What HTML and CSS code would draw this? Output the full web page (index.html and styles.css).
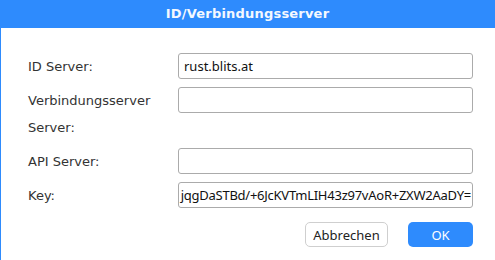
FILE: index.html
```html
<!DOCTYPE html>
<html lang="de">
<head>
    <meta charset="UTF-8">
    <title>ID/Verbindungsserver</title>
    <link rel="stylesheet" href="styles.css">
</head>
<body>
    <div class="dialog">
        <div class="title-bar">ID/Verbindungsserver</div>

        <form class="server-form">
            <label class="field-label" for="id-server">ID Server:</label>
            <input class="field-input" type="text" id="id-server" value="rust.blits.at">

            <label class="field-label" for="relay-server">Verbindungsserver Server:</label>
            <input class="field-input" type="text" id="relay-server">

            <label class="field-label" for="api-server">API Server:</label>
            <input class="field-input" type="text" id="api-server">

            <label class="field-label" for="key">Key:</label>
            <div class="field-input key-box" id="key"><span>jqgDaSTBd/+6JcKVTmLIH43z97vAoR+ZXW2AaDY=</span></div>

            <div class="actions">
                <button type="button" class="btn btn-cancel">Abbrechen</button>
                <button type="submit" class="btn btn-ok">OK</button>
            </div>
        </form>
    </div>
</body>
</html>
```

FILE: styles.css
```css
body {
    margin: 0;
    padding: 0;
    background-color: #fff;
    font-family: 'DejaVu Sans', Verdana, sans-serif;
    color: #333;
}

.dialog {
    width: 495px;
    height: 260px;
    box-sizing: border-box;
    border-left: 1px solid #2e8bfd;
    background-color: #fff;
}

.title-bar {
    height: 28px;
    line-height: 28px;
    background-color: #2e8bfd;
    color: #f4f8ff;
    font-weight: bold;
    font-size: 13px;
    letter-spacing: 0.2px;
    text-align: center;
    margin-left: -1px;
}

.server-form {
    display: grid;
    grid-template-columns: 150px 295px;
    row-gap: 7px;
    padding: 25px 22px 0 27px;
}

.field-label {
    font-size: 13px;
    line-height: 27px;
    color: #333;
}

.field-input {
    height: 26px;
    box-sizing: border-box;
    border: 1px solid #ababab;
    border-radius: 3px;
    padding: 0 5px;
    font-family: 'Noto Sans', sans-serif;
    font-size: 13px;
    color: #111;
    outline: none;
    background-color: #fff;
}

.key-box {
    display: flex;
    justify-content: flex-end;
    align-items: center;
    overflow: hidden;
    white-space: nowrap;
    letter-spacing: -0.25px;
    padding: 0 1px 0 0;
}

.actions {
    grid-column: 1 / span 2;
    display: flex;
    justify-content: flex-end;
    gap: 20px;
    margin-top: 6px;
}

.btn {
    height: 25px;
    border-radius: 5px;
    font-family: 'Noto Sans', sans-serif;
    font-size: 13px;
    cursor: pointer;
    padding: 0;
}

.btn-cancel {
    width: 83px;
    background-color: #fff;
    border: 1px solid #cfcfcf;
    color: #222;
}

.btn-ok {
    width: 65px;
    background-color: #2e8bfd;
    border: none;
    color: #fff;
}
```
